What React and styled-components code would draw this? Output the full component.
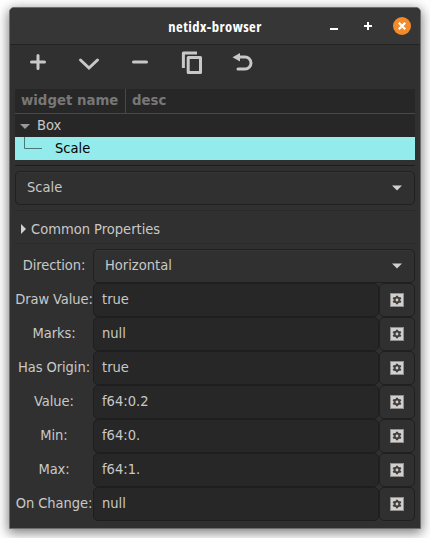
import React from "react";
import styled, { createGlobalStyle } from "styled-components";

const Global = createGlobalStyle`
  * { box-sizing: border-box; }
  body { margin: 0; background: #fff; overflow: hidden; }
`;

const Desktop = styled.div`
  width: 430px;
  height: 538px;
  padding: 7px 9px 9px;
  overflow: hidden;
  background: #fff;
  font-family: "DejaVu Sans Condensed", "DejaVu Sans", sans-serif;
  font-stretch: condensed;
  font-size: 14.55px;
  color: #c8c8c8;
`;

const Window = styled.div`
  width: 412px;
  height: 522px;
  border: 1px solid #6e6e6e;
  border-radius: 5px 5px 0 0;
  background: #303030;
  box-shadow: 0 3px 12px 1px rgba(0, 0, 0, 0.5);
  display: flex;
  flex-direction: column;
`;

const TitleBar = styled.header`
  height: 37px;
  flex: none;
  display: grid;
  grid-template-columns: 1fr auto 1fr;
  align-items: center;
  background: #363636;
  border-bottom: 1px solid #232323;
  border-radius: 4px 4px 0 0;
`;

const Title = styled.h1`
  grid-column: 2;
  margin: 0;
  font: 700 14.67px/18px "Open Sans", "Noto Sans", sans-serif;
  font-stretch: 75%;
  letter-spacing: 0.45px;
  color: #fff;
`;

const Controls = styled.div`
  display: flex;
  justify-content: flex-end;
  gap: 16px;
  padding-right: 9px;
`;

const Icon = styled.svg`
  display: block;
  flex: none;
`;

const Toolbar = styled.nav`
  height: 44px;
  flex: none;
  padding: 5px 0 0 16px;
  display: flex;
  gap: 27px;
`;

const Content = styled.main`
  padding: 0 5px;
  display: flex;
  flex-direction: column;
`;

const Tree = styled.section`
  height: 71px;
  background: #272727;
`;

const TreeHeader = styled.div`
  height: 25px;
  display: flex;
  border-bottom: 1px solid #484848;
  font-weight: 700;
  font-size: 14.8px;
  line-height: 21px;
  color: #777;
`;

const HeaderCell = styled.div`
  width: ${(p) => p.$width};
  padding-left: 6px;
  border-right: ${(p) => (p.$divided ? "1px solid #484848" : "0")};
  white-space: nowrap;
`;

const TreeRow = styled.div`
  height: 23px;
  display: flex;
  line-height: 22px;
  background: ${(p) => (p.$selected ? "#94ebeb" : "transparent")};
  color: ${(p) => (p.$selected ? "#000" : "#c8c8c8")};
`;

const Rule = styled.div`
  height: 1px;
  margin: ${(p) => p.$margin};
  background: ${(p) => p.$color};
`;

const Combo = styled.div`
  height: 34px;
  padding: 0 12px 0 11px;
  display: flex;
  align-items: center;
  justify-content: space-between;
  line-height: 29px;
  border: 1px solid #202020;
  border-radius: 5px;
  background: #303030;
  box-shadow: inset 0 1px #363636;
`;

const ComboText = styled.span`
  padding-bottom: 3px;
`;

const Expander = styled.div`
  height: 32px;
  display: flex;
  align-items: center;
  padding: 4px 0 0 5px;
  gap: 4px;
`;

const ExpanderText = styled.span`
  padding-bottom: 2px;
`;

const Form = styled.div`
  margin-top: 5px;
  display: grid;
  grid-template-columns: 78px 286px 36px;
  grid-auto-rows: 34px;
`;

const Label = styled.label`
  justify-self: center;
  white-space: nowrap;
  line-height: 31px;
  letter-spacing: -0.08px;
`;

const WideCell = styled.div`
  grid-column: 2 / 4;
`;

const Entry = styled.div`
  padding-left: 8px;
  line-height: 29px;
  border: 1px solid #1e1e1e;
  border-radius: 5px;
  background: #272727;
`;

const GearButton = styled.button`
  padding: 0;
  display: flex;
  align-items: center;
  justify-content: center;
  border: 1px solid #202020;
  border-radius: 5px;
  background: #303030;
`;

const Arrow = () => (
  <Icon width="10" height="6" viewBox="0 0 10 6">
    <path d="M0 .5h10L5 5.5z" fill="#d0d0d0" />
  </Icon>
);

const Gear = () => (
  <Icon width="14" height="14" viewBox="0 0 14 14">
    <rect x=".5" y=".5" width="13" height="13" fill="#d0d0d0" stroke="#909090" />
    <circle cx="7" cy="7" r="2.4" fill="none" stroke="#45403c" strokeWidth="2" />
    <path d="M7 2.8v1.6M7 9.6v1.6M3.1 4.8l1.6.9M9.3 8.3l1.6.9M3.1 9.2l1.6-.9M9.3 5.7l1.6-.9" stroke="#45403c" strokeWidth="2" />
  </Icon>
);

const fields = [
  ["Draw Value:", "true"],
  ["Marks:", "null"],
  ["Has Origin:", "true"],
  ["Value:", "f64:0.2"],
  ["Min:", "f64:0."],
  ["Max:", "f64:1."],
  ["On Change:", "null"],
];

const tools = [
  <path key="add" d="M12 5.5v13M5.5 12h13" />,
  <path key="down" d="m3.5 10 8.5 8 8.5-8" />,
  <path key="remove" d="M5.5 12h13" />,
  <g key="copy" strokeLinecap="butt" strokeLinejoin="round">
    <path d="M4.4 18V3H18" />
    <rect x="9.2" y="7.4" width="12.3" height="15" />
  </g>,
  <g key="undo">
    <path d="M9 7h6a5.7 5.7 0 0 1 0 12H8" />
    <path d="M2.5 7.2 10 3v8.4z" fill="#c8c8c8" stroke="none" />
  </g>,
];

export default function App() {
  return (
    <Desktop>
      <Global />
      <Window>
        <TitleBar>
          <Title>netidx-browser</Title>
          <Controls>
            <Icon width="18" height="18" viewBox="0 0 18 18">
              <path d="M5 12h8" stroke="#fff" strokeWidth="2" />
            </Icon>
            <Icon width="18" height="18" viewBox="0 0 18 18">
              <path d="M5 9h8M9 5v8" stroke="#fff" strokeWidth="2" />
            </Icon>
            <Icon width="18" height="18" viewBox="0 0 18 18">
              <circle cx="9" cy="9" r="9" fill="#f38b2b" />
              <path d="m5.8 5.8 6.4 6.4m0-6.4-6.4 6.4" stroke="#fff" strokeWidth="2.3" />
            </Icon>
          </Controls>
        </TitleBar>
        <Toolbar>
          {tools.map((shape) => (
            <Icon key={shape.key} width="24" height="24" viewBox="0 0 24 24" fill="none" stroke="#c8c8c8" strokeWidth="3" strokeLinecap="round">
              {shape}
            </Icon>
          ))}
        </Toolbar>
        <Content>
          <Tree>
            <TreeHeader>
              <HeaderCell $width="111px" $divided>widget name</HeaderCell>
              <HeaderCell $width="auto">desc</HeaderCell>
            </TreeHeader>
            <TreeRow>
              <Icon width="22" height="23" viewBox="0 0 22 23">
                <path d="M5 10h10l-5 5z" fill="#999" />
              </Icon>
              Box
            </TreeRow>
            <TreeRow $selected>
              <Icon width="40" height="23" viewBox="0 0 40 23">
                <path d="M9.5 0v11.5H27" fill="none" stroke="#4b7777" />
              </Icon>
              Scale
            </TreeRow>
          </Tree>
          <Rule $margin="5px 0" $color="#1c1c1c" />
          <Combo><ComboText>Scale</ComboText><Arrow /></Combo>
          <Rule $margin="5px 0 0" $color="#292929" />
          <Expander>
            <Icon width="7" height="10" viewBox="0 0 7 10">
              <path d="M1 0v10l5-5z" fill="#d0d0d0" />
            </Icon>
            <ExpanderText>Common Properties</ExpanderText>
          </Expander>
          <Rule $margin="0" $color="#292929" />
          <Form>
            <Label>Direction:</Label>
            <WideCell><Combo><ComboText>Horizontal</ComboText><Arrow /></Combo></WideCell>
            {fields.map(([label, value]) => (
              <React.Fragment key={label}>
                <Label>{label}</Label>
                <Entry>{value}</Entry>
                <GearButton><Gear /></GearButton>
              </React.Fragment>
            ))}
          </Form>
        </Content>
      </Window>
    </Desktop>
  );
}
